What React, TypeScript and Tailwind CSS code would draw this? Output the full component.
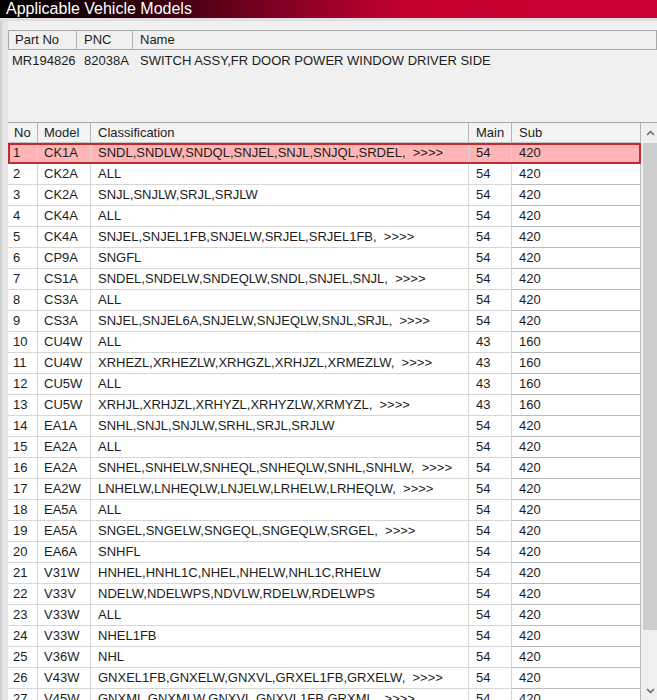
import { FC } from "react"

type Row = [string, string, string, string, string]

const rows: Row[] = [
  ["1", "CK1A", "SNDL,SNDLW,SNDQL,SNJEL,SNJL,SNJQL,SRDEL,  >>>>", "54", "420"],
  ["2", "CK2A", "ALL", "54", "420"],
  ["3", "CK2A", "SNJL,SNJLW,SRJL,SRJLW", "54", "420"],
  ["4", "CK4A", "ALL", "54", "420"],
  ["5", "CK4A", "SNJEL,SNJEL1FB,SNJELW,SRJEL,SRJEL1FB,  >>>>", "54", "420"],
  ["6", "CP9A", "SNGFL", "54", "420"],
  ["7", "CS1A", "SNDEL,SNDELW,SNDEQLW,SNDL,SNJEL,SNJL,  >>>>", "54", "420"],
  ["8", "CS3A", "ALL", "54", "420"],
  ["9", "CS3A", "SNJEL,SNJEL6A,SNJELW,SNJEQLW,SNJL,SRJL,  >>>>", "54", "420"],
  ["10", "CU4W", "ALL", "43", "160"],
  ["11", "CU4W", "XRHEZL,XRHEZLW,XRHGZL,XRHJZL,XRMEZLW,  >>>>", "43", "160"],
  ["12", "CU5W", "ALL", "43", "160"],
  ["13", "CU5W", "XRHJL,XRHJZL,XRHYZL,XRHYZLW,XRMYZL,  >>>>", "43", "160"],
  ["14", "EA1A", "SNHL,SNJL,SNJLW,SRHL,SRJL,SRJLW", "54", "420"],
  ["15", "EA2A", "ALL", "54", "420"],
  ["16", "EA2A", "SNHEL,SNHELW,SNHEQL,SNHEQLW,SNHL,SNHLW,  >>>>", "54", "420"],
  ["17", "EA2W", "LNHELW,LNHEQLW,LNJELW,LRHELW,LRHEQLW,  >>>>", "54", "420"],
  ["18", "EA5A", "ALL", "54", "420"],
  ["19", "EA5A", "SNGEL,SNGELW,SNGEQL,SNGEQLW,SRGEL,  >>>>", "54", "420"],
  ["20", "EA6A", "SNHFL", "54", "420"],
  ["21", "V31W", "HNHEL,HNHL1C,NHEL,NHELW,NHL1C,RHELW", "54", "420"],
  ["22", "V33V", "NDELW,NDELWPS,NDVLW,RDELW,RDELWPS", "54", "420"],
  ["23", "V33W", "ALL", "54", "420"],
  ["24", "V33W", "NHEL1FB", "54", "420"],
  ["25", "V36W", "NHL", "54", "420"],
  ["26", "V43W", "GNXEL1FB,GNXELW,GNXVL,GRXEL1FB,GRXELW,  >>>>", "54", "420"],
  ["27", "V45W", "GNXML,GNXMLW,GNXVL,GNXVL1FB,GRXML,  >>>>", "54", "420"],
]

const Chevron: FC<{ up?: boolean }> = ({ up }) => (
  <svg width="9" height="6" viewBox="0 0 9 6" className="block">
    <polyline
      points={up ? "1,5 4.5,1.5 8,5" : "1,1 4.5,4.5 8,1"}
      fill="none"
      stroke="#606060"
      strokeWidth="1.4"
    />
  </svg>
)

const App: FC = () => {
  return (
    <div className="w-[657px] h-[700px] overflow-hidden flex flex-col bg-[#f0f0f0] text-[13px] text-[#1c1c1c] font-['Liberation_Sans',Arial,sans-serif]">
      <div className="h-[18px] shrink-0 flex items-center pl-[6px] bg-[linear-gradient(90deg,#000_0%,#2a000b_20%,#8a0024_45%,#c4002f_62%,#cc0033_100%)]">
        <span className="text-white text-[16px] leading-none [text-shadow:0_0_1px_rgba(0,0,0,0.6)]">
          Applicable Vehicle Models
        </span>
      </div>
      <div className="h-[3px] shrink-0 bg-[#dedede] border-t border-[#e8e2e6]" />

      <div className="flex-1 flex min-h-0">
        <div className="w-[8px] shrink-0 bg-[#e4e4e4] border-l-2 border-[#d0d0d0]" />

        <div className="flex-1 flex flex-col min-w-0 pt-[9px]">
          {/* part info */}
          <div className="h-[91px] shrink-0 bg-[#f0f0f0]">
            <div className="h-[20px] flex border border-[#a8a8a8] bg-[#f0f0f0]">
              <div className="w-[68px] pl-[6px] flex items-center border-r border-[#b4b4b4]">Part No</div>
              <div className="w-[56px] pl-[7px] flex items-center border-r border-[#b4b4b4]">PNC</div>
              <div className="flex-1 pl-[7px] flex items-center">Name</div>
            </div>
            <div className="h-[21px] flex items-center">
              <div className="w-[68px] pl-[4px]">MR194826</div>
              <div className="w-[56px] pl-[8px]">82038A</div>
              <div className="flex-1 pl-[8px]">SWITCH ASSY,FR DOOR POWER WINDOW DRIVER SIDE</div>
            </div>
          </div>

          <div className="h-px shrink-0" />

          {/* models grid */}
          <div className="flex-1 flex min-h-0 border-t border-[#a8a8a8]">
            <div className="w-[633px] bg-white flex flex-col">
              <div className="h-[20px] shrink-0 flex bg-[#f3f3f3] border-b border-[#c4c4c4]">
                <div className="w-[30px] pl-[6px] flex items-center border-r border-[#b4b4b4]">No</div>
                <div className="w-[53px] pl-[6px] flex items-center border-r border-[#b4b4b4]">Model</div>
                <div className="w-[378px] pl-[7px] flex items-center border-r border-[#b4b4b4]">Classification</div>
                <div className="w-[43px] pl-[7px] flex items-center border-r border-[#b4b4b4]">Main</div>
                <div className="w-[129px] pl-[7px] flex items-center border-r border-[#b4b4b4]">Sub</div>
              </div>
              {rows.map((r, i) => (
                <div
                  key={r[0]}
                  className={
                    i === 0
                      ? "h-[21px] shrink-0 flex bg-[#ffb5b5] outline-2 outline-solid outline-[#c02a30] -outline-offset-2"
                      : "h-[21px] shrink-0 flex"
                  }
                >
                  <div className="w-[30px] pl-[5px] flex items-center border-r border-b border-[#d6d6d6]">{r[0]}</div>
                  <div className="w-[53px] pl-[6px] flex items-center border-r border-b border-[#d6d6d6]">{r[1]}</div>
                  <div className="w-[378px] pl-[7px] flex items-center border-r border-b border-[#d6d6d6] whitespace-pre">
                    {r[2]}
                  </div>
                  <div className="w-[43px] pl-[7px] flex items-center border-r border-b border-[#d6d6d6]">{r[3]}</div>
                  <div className="w-[129px] pl-[7px] flex items-center border-r border-b border-[#bcbcbc]">{r[4]}</div>
                </div>
              ))}
            </div>

            {/* scrollbar */}
            <div className="w-[16px] flex flex-col bg-[#efefef] pl-[2px]">
              <div className="h-[20px] shrink-0 flex items-center justify-center">
                <Chevron up />
              </div>
              <div className="h-[487px] shrink-0 bg-[#cdcdcd]" />
              <div className="flex-1" />
              <div className="h-[18px] shrink-0 flex items-center justify-center">
                <Chevron />
              </div>
            </div>
          </div>
        </div>
      </div>
    </div>
  )
}

export default App
